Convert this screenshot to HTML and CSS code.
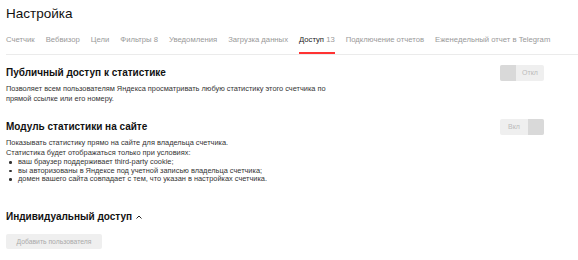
FILE: index.html
```html
<!DOCTYPE html>
<html>
  <head>
    <link rel="stylesheet" href="styles.css">
  </head>
  <body>
    <header class="page-head">
      <h1 class="title">Настройка</h1>
      <nav class="tabs">
        <span class="tab">Счетчик</span>
        <span class="tab">Вебвизор</span>
        <span class="tab">Цели</span>
        <span class="tab">Фильтры <span class="count">8</span></span>
        <span class="tab">Уведомления</span>
        <span class="tab">Загрузка данных</span>
        <span class="tab tab-active">Доступ <span class="count">13</span></span>
        <span class="tab">Подключение отчетов</span>
        <span class="tab">Еженедельный отчет в Telegram</span>
      </nav>
    </header>
    <main class="content">
      <section class="setting">
        <div class="setting-text">
          <h2 class="setting-title">Публичный доступ к статистике</h2>
          <p class="setting-desc">Позволяет всем пользователям Яндекса просматривать любую статистику этого счетчика по<br>прямой ссылке или его номеру.</p>
        </div>
        <div class="toggle">
          <span class="knob"></span>
          <span class="toggle-label">Откл</span>
        </div>
      </section>
      <section class="setting setting-module">
        <div class="setting-text">
          <h2 class="setting-title">Модуль статистики на сайте</h2>
          <p class="setting-desc">Показывать статистику прямо на сайте для владельца счетчика.<br>Статистика будет отображаться только при условиях:</p>
          <ul class="conditions">
            <li>ваш браузер поддерживает third-party cookie;</li>
            <li>вы авторизованы в Яндексе под учетной записью владельца счетчика;</li>
            <li>домен вашего сайта совпадает с тем, что указан в настройках счетчика.</li>
          </ul>
        </div>
        <div class="toggle">
          <span class="toggle-label">Вкл</span>
          <span class="knob"></span>
        </div>
      </section>
      <section class="individual">
        <h2 class="setting-title">Индивидуальный доступ
          <svg class="chevron" width="8" height="6" viewBox="0 0 8 6"><path d="M1.5 4.5 L4 2 L6.5 4.5" fill="none" stroke="#222" stroke-width="1"/></svg>
        </h2>
        <button class="add-user">Добавить пользователя</button>
      </section>
    </main>
  </body>
</html>
```

FILE: styles.css
```css
* {
  margin: 0;
  padding: 0;
  box-sizing: border-box;
}
body {
  font-family: "Liberation Sans", Arial, sans-serif;
  color: #222;
  background-color: #fff;
  width: 578px;
  height: 260px;
  overflow: hidden;
}
.page-head {
  padding: 5px 0 0 6px;
}
.title {
  font-size: 13.5px;
  font-weight: normal;
  line-height: 18px;
  color: #111;
}
.tabs {
  display: flex;
  gap: 11px;
  margin-top: 12px;
  border-bottom: 1px solid #ebebeb;
  font-size: 7.7px;
  color: #999;
  white-space: nowrap;
}
.tab {
  padding-bottom: 8px;
  line-height: 9px;
  border-bottom: 2px solid transparent;
}
.tab-active {
  color: #222;
  border-bottom-color: #f33;
}
.tab-active .count {
  color: #999;
}
.content {
  padding: 0 34px 0 6px;
}
.setting {
  display: flex;
  justify-content: space-between;
  align-items: flex-start;
  padding-top: 11px;
}
.setting-module {
  padding-top: 16px;
}
.setting-title {
  font-size: 10px;
  font-weight: bold;
  line-height: 14px;
  color: #111;
  display: flex;
  align-items: center;
  gap: 3px;
}
.setting-desc {
  margin-top: 4px;
  font-size: 7.4px;
  line-height: 10px;
  color: #333;
}
.conditions {
  list-style: none;
  font-size: 7.4px;
  line-height: 8.5px;
  color: #333;
}
.conditions li {
  position: relative;
  padding-left: 12px;
}
.conditions li::before {
  content: "";
  position: absolute;
  left: 3px;
  top: 3px;
  width: 2.5px;
  height: 2.5px;
  border-radius: 50%;
  background-color: #333;
}
.toggle {
  display: flex;
  width: 44px;
  height: 16px;
  margin-top: -1px;
  background-color: #efefef;
  border-radius: 2px;
  overflow: hidden;
}
.knob {
  width: 16px;
  background-color: #d9d9d9;
}
.toggle-label {
  flex: 1;
  text-align: center;
  font-size: 7px;
  line-height: 16px;
  color: #bbb;
}
.individual {
  padding-top: 26px;
}
.chevron {
  margin-top: 1px;
}
.add-user {
  margin-top: 10px;
  width: 96px;
  height: 15px;
  border: none;
  border-radius: 2px;
  background-color: #efefef;
  color: #aaa;
  font-family: "Liberation Sans", Arial, sans-serif;
  font-size: 6.8px;
}
```
